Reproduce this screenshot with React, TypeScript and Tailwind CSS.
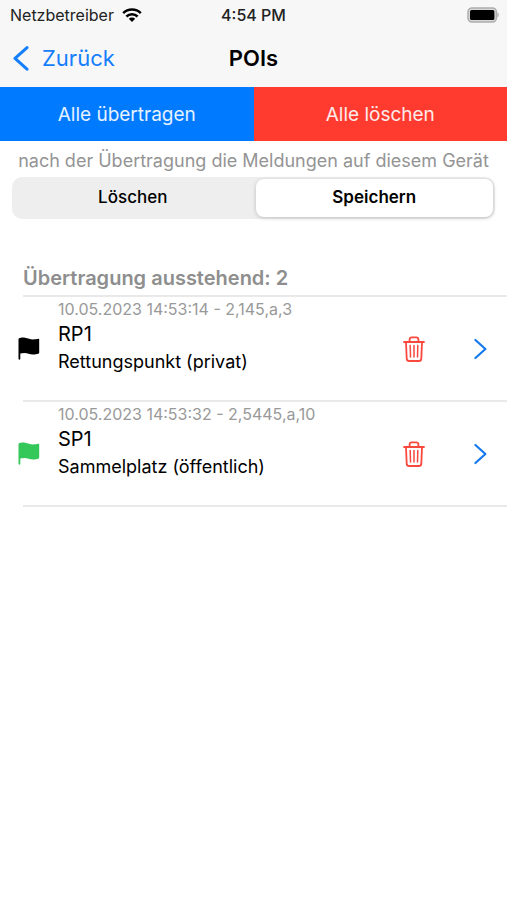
import { useState } from 'react';

type Poi = {
  id: number;
  meta: string;
  name: string;
  kind: string;
  flagClass: string;
};

const INITIAL_POIS: Poi[] = [
  { id: 1, meta: '10.05.2023 14:53:14 - 2,145,a,3',    name: 'RP1', kind: 'Rettungspunkt (privat)',    flagClass: 'text-black' },
  { id: 2, meta: '10.05.2023 14:53:32 - 2,5445,a,10',  name: 'SP1', kind: 'Sammelplatz (öffentlich)',  flagClass: 'text-[#34c759]' },
];

const AFTER_TRANSFER = [
  { value: 'delete', label: 'Löschen' },
  { value: 'keep',   label: 'Speichern' },
];

function WifiIcon() {
  return (
    <svg viewBox="0 0 20 14" className="w-5 h-3.5" fill="none" stroke="currentColor" strokeWidth="2.5" aria-hidden="true">
      <path d="M1.2 5.1C6 .3 14 .3 18.8 5.1" />
      <path d="M4.4 8.5c3.1-3 8.1-3 11.2 0" />
      <path d="M10 14 6.8 10.8c1.7-1.6 4.7-1.6 6.4 0z" fill="currentColor" stroke="none" />
    </svg>
  );
}

function BatteryIcon() {
  return (
    <svg viewBox="0 0 32 16" className="w-8 h-4" aria-hidden="true">
      <rect x="1" y=".9" width="28.4" height="14.2" rx="4" fill="#d8d8d8" stroke="#adadad" strokeWidth="1.5" />
      <rect x="3" y="3" width="24.4" height="10" rx="1.6" />
      <path d="M30.4 5.6c1.8.5 1.8 4.3 0 4.8z" fill="#adadad" />
    </svg>
  );
}

function FlagIcon() {
  return (
    <svg viewBox="0 0 22 23" className="w-[22px] h-[23px]" fill="currentColor" aria-hidden="true">
      <path d="M.6 1.7C2.2.7 4.8.4 7 .7c3.2.5 5 1.7 8 1.7 2.2 0 3.9-.5 5.2-.7.6-.1 1 .2 1 .8v13.1c0 .6-.3 1-.9 1.1-1.4.4-3.2.8-5.3.8-3.3 0-5.4-1.6-8.6-1.6-1.7 0-3 .2-4.1.6v5.3c0 .5-.4.9-.9.9s-.9-.4-.9-.9V2.4c0-.3 0-.5.1-.7z" />
    </svg>
  );
}

function TrashIcon() {
  return (
    <svg viewBox="0 0 22 26" className="w-[22px] h-[26px]" fill="none" stroke="currentColor" strokeWidth="1.8" strokeLinecap="round" strokeLinejoin="round" aria-hidden="true">
      <path d="M1 6h20" />
      <path d="M6.6 5.8V3.6c0-1.4.9-2.2 2.2-2.2h4.4c1.3 0 2.2.8 2.2 2.2v2.2" />
      <path d="m3 6.2.7 16.4c.1 1.6 1 2.4 2.5 2.4h9.6c1.5 0 2.4-.8 2.5-2.4L19 6.2" />
      <path d="m7.2 9.6.3 11.4M11 9.6V21M14.8 9.6 14.5 21" strokeWidth="1.5" />
    </svg>
  );
}

function PoiRow({ poi, onDelete }: { poi: Poi; onDelete: () => void }) {
  return (
    <li className="flex items-center h-[105px] border-b-2 border-[#e9e9e9] pr-5">
      <span className={`-ml-[5px] w-10 shrink-0 ${poi.flagClass}`}>
        <FlagIcon />
      </span>
      <div className="flex-1 min-w-0 self-start pt-0.5">
        <p className="text-base leading-5 mb-px text-[#999999]">{poi.meta}</p>
        <p className="text-xl leading-7">{poi.name}</p>
        <p className="text-lg leading-7">{poi.kind}</p>
      </div>
      <button type="button" onClick={onDelete} aria-label={`${poi.name} löschen`} className="text-[#f9483e] shrink-0">
        <TrashIcon />
      </button>
      <button type="button" aria-label={`${poi.name} öffnen`} className="ml-12 text-[#1479ee] shrink-0">
        <svg viewBox="0 0 14 22" className="w-3.5 h-[22px]" fill="none" stroke="currentColor" strokeWidth="2.2" strokeLinecap="round" strokeLinejoin="round" aria-hidden="true">
          <path d="m2.4 2 10 9-10 9" />
        </svg>
      </button>
    </li>
  );
}

export default function App() {
  const [pois, setPois] = useState(INITIAL_POIS);
  const [after, setAfter] = useState('keep');

  return (
    <div className="min-h-screen bg-white text-black font-['Inter','Liberation_Sans',sans-serif]">
      <header className="bg-[#f7f7f7]">
        <div className="grid grid-cols-[1fr_auto_1fr] items-center h-[30px] px-2 text-base text-[#222222]">
          <span className="flex items-center gap-2 pl-0.5">
            Netzbetreiber
            <span className="text-black"><WifiIcon /></span>
          </span>
          <span className="font-medium">4:54 PM</span>
          <span className="justify-self-end"><BatteryIcon /></span>
        </div>
        <nav className="grid grid-cols-[1fr_auto_1fr] items-center h-[57px] px-3">
          <button type="button" className="flex items-center gap-3 justify-self-start text-[22px] text-[#147efb]">
            <svg viewBox="0 0 18 26" className="w-[18px] h-[26px]" fill="none" stroke="currentColor" strokeWidth="3" strokeLinecap="round" strokeLinejoin="round" aria-hidden="true">
              <path d="M15 1.6 3 12.4 15 23.2" />
            </svg>
            Zurück
          </button>
          <h1 className="text-[22px] font-semibold">POIs</h1>
        </nav>
      </header>

      <main>
        <div className="grid grid-cols-2 h-[54px] text-[19px] text-white/90">
          <button type="button" className="pt-0.5 bg-[#007aff]">Alle übertragen</button>
          <button type="button" onClick={() => setPois([])} className="pt-0.5 bg-[#ff3b30]">Alle löschen</button>
        </div>

        <div role="radiogroup" aria-labelledby="after-transfer-label" className="px-3 pt-1">
          <p id="after-transfer-label" className="flex justify-center text-lg leading-8 text-[#949494] whitespace-nowrap">
            nach der Übertragung die Meldungen auf diesem Gerät
          </p>
          <div className="grid grid-cols-2 gap-1 h-[42px] p-0.5 rounded-[10px] bg-[#eeeeee]">
            {AFTER_TRANSFER.map(({ value, label }) => (
              <label
                key={value}
                className={`relative flex items-center justify-center rounded-lg text-[17px] cursor-pointer ${
                  after === value ? 'bg-white font-semibold shadow-[0_1px_4px_rgba(0,0,0,0.2)]' : 'font-medium'
                }`}
              >
                <input
                  type="radio"
                  name="after-transfer"
                  value={value}
                  checked={after === value}
                  onChange={() => setAfter(value)}
                  className="sr-only"
                />
                {label}
              </label>
            ))}
          </div>
        </div>

        <section className="pl-[23px] pt-10">
          <h2 className="h-[38px] text-xl leading-[38px] font-semibold text-[#8e8e8e] border-b-2 border-[#e9e9e9]">
            Übertragung ausstehend: {pois.length}
          </h2>
          <ul>
            {pois.map(p => (
              <PoiRow key={p.id} poi={p} onDelete={() => setPois(pois.filter(x => x.id !== p.id))} />
            ))}
          </ul>
        </section>
      </main>
    </div>
  );
}
